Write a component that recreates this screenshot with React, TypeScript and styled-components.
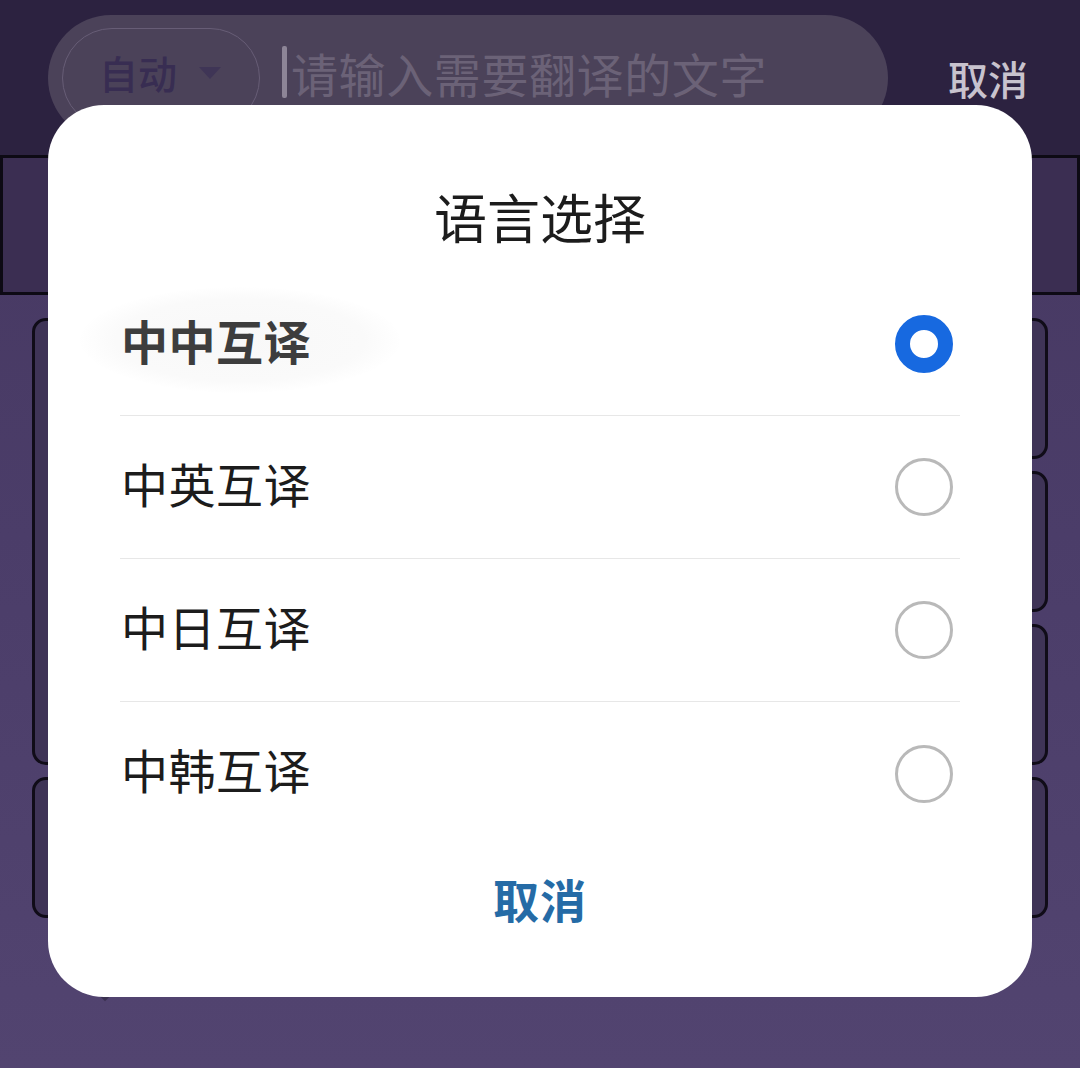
import React, { useState } from 'react';
import styled, { createGlobalStyle } from 'styled-components';

const GlobalStyle = createGlobalStyle`
  html, body {
    margin: 0;
    padding: 0;
    background: #2c2240;
  }
  body {
    font-family: 'Noto Sans CJK SC', 'Noto Sans', sans-serif;
  }
`;

const Page = styled.div`
  position: relative;
  width: 1080px;
  height: 1068px;
  overflow: hidden;
  background: linear-gradient(180deg, #45375f 0%, #4b3d69 50%, #524470 100%);
  display: flex;
  flex-direction: column;
`;

const TopBar = styled.header`
  height: 155px;
  box-sizing: border-box;
  background: #2c2240;
  display: flex;
  align-items: flex-start;
  padding: 15px 0 0 48px;
`;

const SearchPill = styled.div`
  width: 840px;
  height: 126px;
  border-radius: 63px;
  background: #4b4259;
  display: flex;
  align-items: flex-start;
  padding: 13px 0 0 14px;
  box-sizing: border-box;
`;

const LangPill = styled.div`
  width: 198px;
  height: 100px;
  border-radius: 50px;
  border: 1.5px solid #675d76;
  box-sizing: border-box;
  display: flex;
  align-items: center;
  padding: 0 0 12px 36px;
  gap: 22px;
  color: #382d52;
  font-size: 39px;
  font-weight: 500;
`;

const Caret = styled.span`
  width: 0;
  height: 0;
  border-left: 11px solid transparent;
  border-right: 11px solid transparent;
  border-top: 12px solid #3f3556;
  margin-top: 2px;
`;

const Input = styled.div`
  display: flex;
  align-items: center;
  margin-left: 22px;
  height: 100px;
  padding-bottom: 12px;
  box-sizing: border-box;
  color: #6b6277;
  font-size: 47px;
  letter-spacing: 0.6px;
`;

const Cursor = styled.span`
  width: 5px;
  height: 52px;
  background: #8d8597;
  border-radius: 2px;
  margin-right: 4px;
`;

const TopCancel = styled.span`
  margin-left: 60px;
  margin-top: 35px;
  color: #c8c3ce;
  font-size: 40px;
  line-height: 56px;
  font-weight: 500;
`;

const Band = styled.div`
  height: 140px;
  box-sizing: border-box;
  background: #3b2e52;
  border: 3px solid #0d0a14;
`;

const CardGrid = styled.div`
  display: grid;
  grid-template-columns: 1fr 1fr;
  grid-template-rows: repeat(4, 141px);
  gap: 12px 20px;
  padding: 23px 32px 0;
`;

const Card = styled.div<{ $span?: number }>`
  grid-row: span ${p => p.$span ?? 1};
  border: 3px solid #100c18;
  border-radius: 14px;
  background: #3f3457;
`;

const Diamond = styled.div`
  width: 16px;
  height: 16px;
  background: #3a3150;
  transform: rotate(45deg);
  margin: 64px 0 0 97px;
`;

const Modal = styled.div`
  position: absolute;
  left: 48px;
  top: 105px;
  width: 984px;
  height: 892px;
  background: #ffffff;
  border-radius: 56px;
  display: flex;
  flex-direction: column;
`;

const Title = styled.h2`
  margin: 0;
  padding: 76px 0 22px;
  line-height: 70px;
  text-align: center;
  font-size: 53px;
  font-weight: 400;
  color: #1c1c1c;
`;

const List = styled.div`
  margin: 0 72px;
  display: flex;
  flex-direction: column;
`;

const Row = styled.div<{ $last?: boolean; $active?: boolean }>`
  position: relative;
  height: 143px;
  box-sizing: border-box;
  display: flex;
  align-items: center;
  justify-content: space-between;
  padding-right: 7px;
  border-bottom: ${p => (p.$last ? 'none' : '1.5px solid #e7e7e7')};
  &::before {
    content: '';
    display: ${p => (p.$active ? 'block' : 'none')};
    position: absolute;
    left: -40px;
    top: 14px;
    width: 320px;
    height: 106px;
    border-radius: 50%;
    background: radial-gradient(ellipse at center, #f8f8f8 0%, #fafafa 55%, rgba(255, 255, 255, 0) 72%);
  }
`;

const Label = styled.span<{ $active?: boolean }>`
  position: relative;
  font-size: 47px;
  letter-spacing: 0.5px;
  font-weight: ${p => (p.$active ? 700 : 400)};
  color: ${p => (p.$active ? '#3d3d3d' : '#1c1c1c')};
  margin-left: 1px;
  padding-bottom: 10px;
`;

const Radio = styled.span<{ $checked?: boolean }>`
  width: 58px;
  height: 58px;
  border-radius: 50%;
  box-sizing: border-box;
  border: ${p => (p.$checked ? '15px solid #1769e0' : '3.5px solid #b9b9b9')};
  background: #ffffff;
`;

const Footer = styled.div`
  flex: 1;
  display: flex;
  justify-content: center;
  padding-top: 25px;
`;

const CancelButton = styled.span`
  font-size: 46px;
  line-height: 56px;
  font-weight: 700;
  color: #256ba6;
  letter-spacing: 1px;
`;

const options = ['中中互译', '中英互译', '中日互译', '中韩互译'];

export default function App() {
  const [selected, setSelected] = useState(0);
  return (
    <Page>
      <GlobalStyle />
      <TopBar>
        <SearchPill>
          <LangPill>
            自动
            <Caret />
          </LangPill>
          <Input>
            <Cursor />
            请输入需要翻译的文字
          </Input>
        </SearchPill>
        <TopCancel>取消</TopCancel>
      </TopBar>
      <Band />
      <CardGrid>
        <Card $span={3} />
        <Card />
        <Card />
        <Card />
        <Card />
        <Card />
      </CardGrid>
      <Diamond />
      <Modal>
        <Title>语言选择</Title>
        <List>
          {options.map((o, i) => (
            <Row
              key={o}
              $last={i === options.length - 1}
              $active={i === 0}
              onClick={() => setSelected(i)}
            >
              <Label $active={i === 0}>{o}</Label>
              <Radio $checked={selected === i} />
            </Row>
          ))}
        </List>
        <Footer>
          <CancelButton>取消</CancelButton>
        </Footer>
      </Modal>
    </Page>
  );
}
